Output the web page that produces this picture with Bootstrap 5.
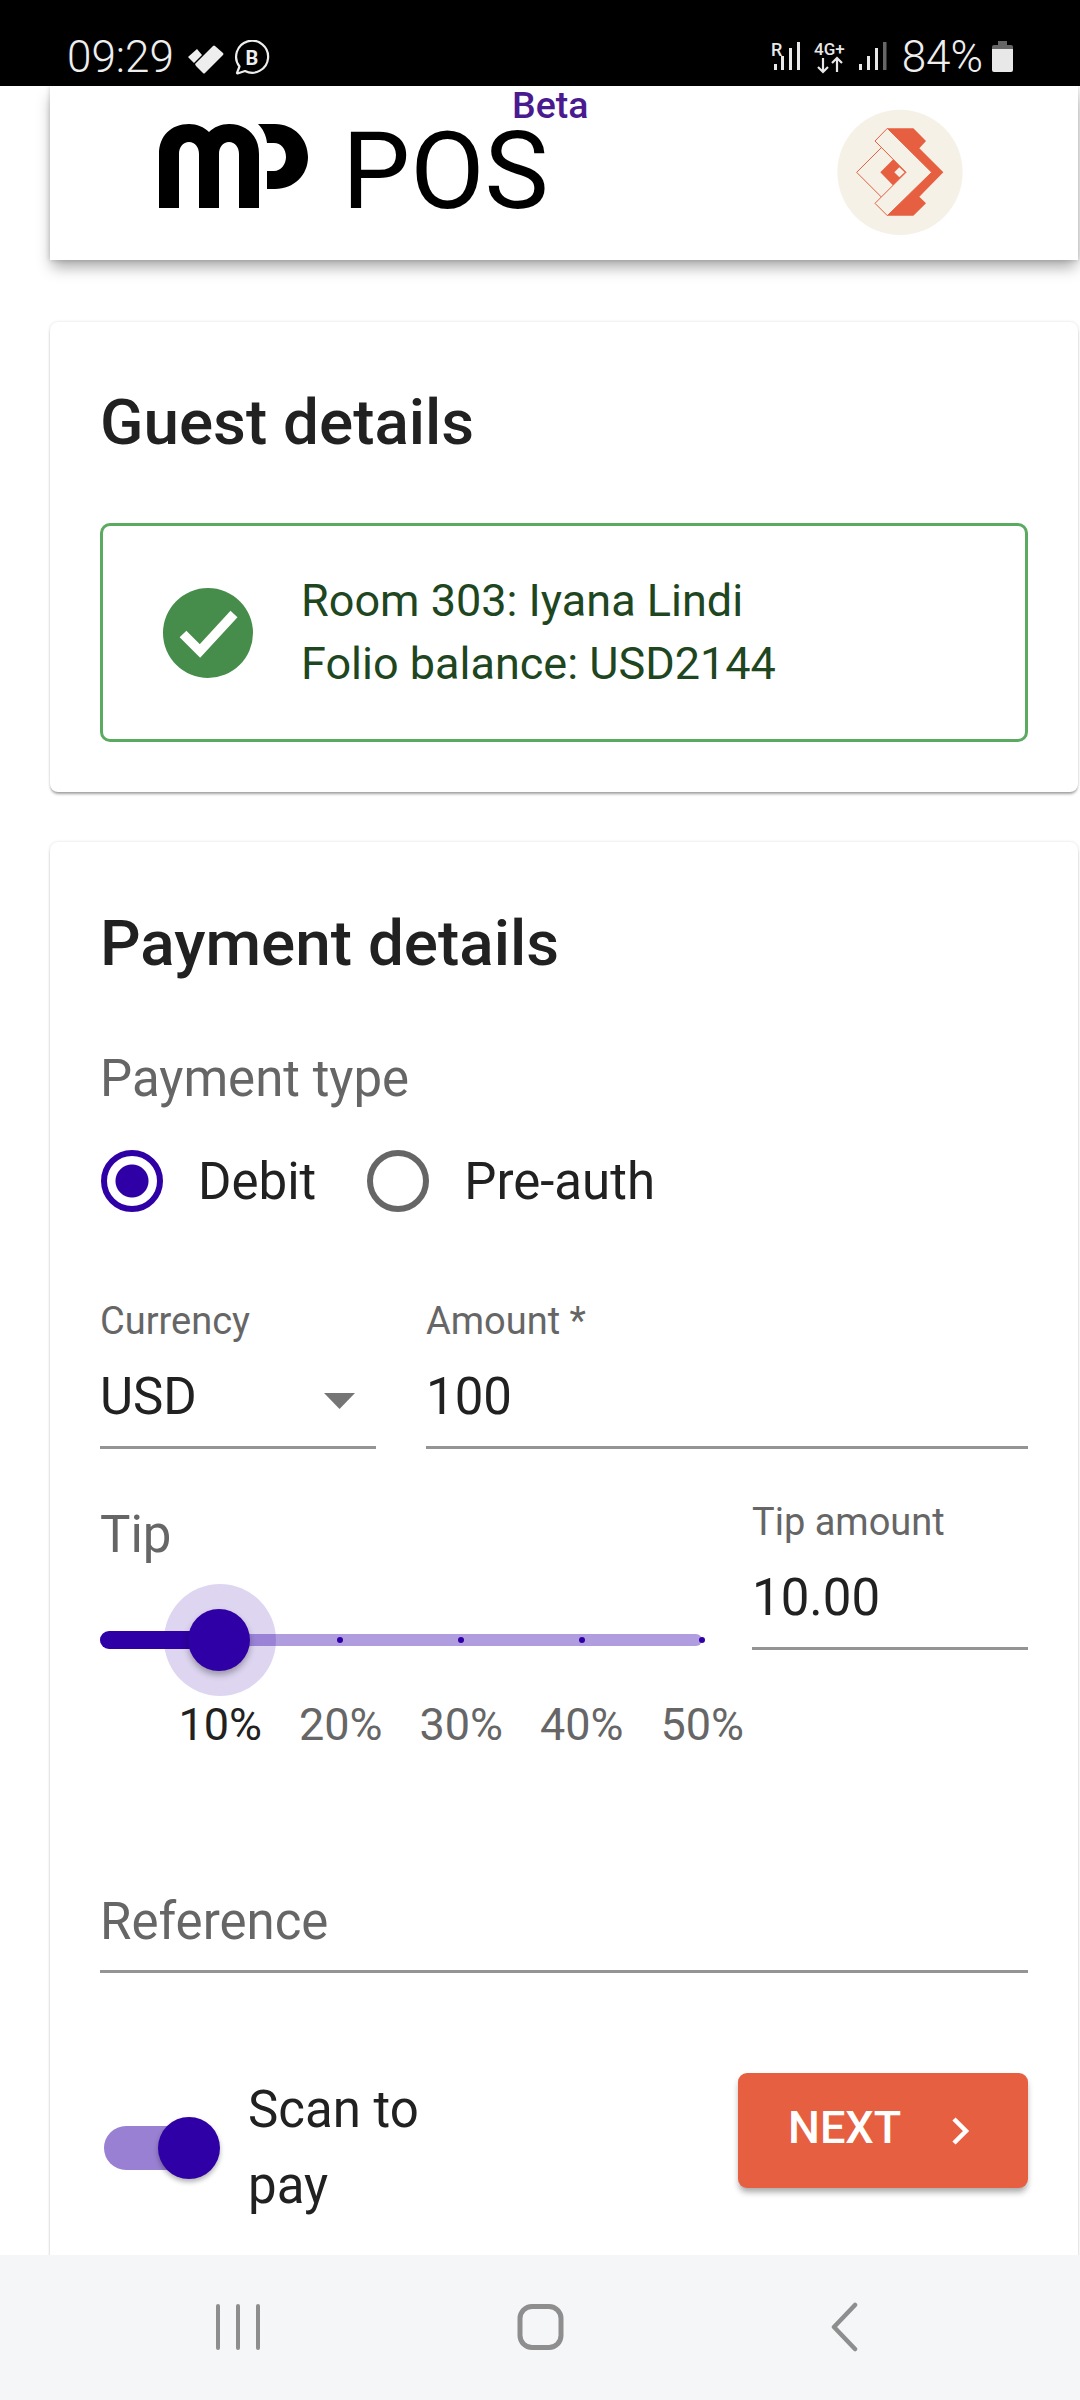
<!DOCTYPE html>
<html lang="en">
<head>
<meta charset="utf-8">
<title>MP POS</title>
<link href="https://cdn.jsdelivr.net/npm/bootstrap@5.3.0/dist/css/bootstrap.min.css" rel="stylesheet">
<style>
html,body{margin:0;height:2400px;overflow:hidden;background:#fff;font-family:Roboto,"Liberation Sans",sans-serif;color:#212121}
.phone{height:2400px;width:1080px}
.status-bar{height:86px;background:#000;color:#eee;padding:0 67px 0 67px;flex:none}
.status-time{font-size:44px;font-weight:300;line-height:40px;margin-top:37px}
.status-pct{font-size:44px;font-weight:300;line-height:40px;margin:37px 9px 0 15px;white-space:nowrap}
.status-ic{display:block;margin-top:41px}
.ic-check{margin-left:14px;margin-top:45px}
.ic-biz{margin-left:10px;margin-top:40px}
.ic-tall{margin-top:38px}
.ml-11{margin-left:11px}.ml-12{margin-left:12px}
.app-main{flex:1 1 auto;min-height:0;padding:0 2px 0 50px}
.app-head{height:174px;background:#fff;box-shadow:0 9px 14px -2px rgba(0,0,0,.34),0 0 5px rgba(0,0,0,.18);position:relative;padding-left:109px}
.mp-logo{display:block;margin-top:38px}
.pos-word{font-size:108px;font-weight:400;line-height:84px;margin:43px 0 0 33px;color:#000}
.beta-tag{position:absolute;left:462px;top:1px;font-size:37.5px;font-weight:500;line-height:36px;color:#4a1a8f}
.pms-logo{display:block;margin:4px 98px 0 auto}
.sheet{border:0;border-radius:8px;background:#fff;box-shadow:0 3px 3px -1px rgba(0,0,0,.35),0 0 3px rgba(0,0,0,.14);--bs-card-bg:#fff}
.sheet-guest{margin-top:62px;height:470px;padding:0 50px}
.sheet-pay{margin-top:50px;height:1500px;padding:0 50px}
.sheet-title{font-size:63.8px;font-weight:500;line-height:76px;margin:0;color:#212121}
.guest-title{padding-top:63px}
.pay-title{padding-top:64px}
.ok-box{margin-top:62px;height:219px;border:3px solid #5aaa5f;border-radius:10px;color:#1e4620;padding-left:60px}
.ok-icon{display:block;flex:none}
.ok-text{margin:0 0 2px 48px;font-size:45px;line-height:63px}
.field-head{font-size:51px;line-height:60px;color:#666}
.pay-type{margin-top:67px}
.radio-row{margin:41px 0 0 1px;height:62px}
.radio-dot{width:62px;height:62px;border-radius:50%;border:6px solid #666;flex:none;display:block}
.radio-dot.on{border-color:#2f00a5;background:radial-gradient(circle,#2f00a5 0 16px,transparent 17px)}
.radio-txt{font-size:51px;line-height:62px;margin-left:35px;margin-right:51px;padding-top:2px;color:#212121}
.pair-row{margin-top:87px}
.f-cur{width:276px;margin-right:50px;flex:none}
.f-amt{flex:1 1 auto}
.f-lab{font-size:38px;line-height:44px;color:#666}
.f-val{font-size:51px;line-height:60px;color:#212121;margin-top:24px;height:79px}
.f-box{border-bottom:3px solid #949494}
.f-arrow{display:block;margin:50px 21px 0 0}
.tip-row{margin-top:55px}
.tip-left{width:652px;flex:none;padding-top:1px}
.tip-field{flex:1 1 auto;margin-top:-4px}
.slide-wrap{position:relative;height:112px;margin-top:19px;width:602px}
.slide-track{position:absolute;left:0;right:0;top:50px;height:12px;border-radius:6px;background:#af9ddf}
.slide-done{position:absolute;left:0;top:47px;width:119px;height:18px;border-radius:9px;background:#2f00a5}
.slide-halo{position:absolute;left:64px;top:0;width:112px;height:112px;border-radius:50%;background:rgba(47,0,165,.16)}
.slide-thumb{position:absolute;left:88px;top:25px;width:62px;height:62px;border-radius:50%;background:#2f00a5;box-shadow:0 4px 6px rgba(0,0,0,.3)}
.slide-tick{position:absolute;top:53px;width:6px;height:6px;border-radius:50%;background:#2f00a5}
.t1{left:237px}.t2{left:358px}.t3{left:479px}.t4{left:599px}
.tick-labels{margin:3px 0 0 60px;width:603px}
.tick-lab{width:120.5px;text-align:center;font-size:45px;line-height:52px;color:#666;flex:none}
.tick-lab.on{color:#212121}
.ref-field{margin-top:141px;height:81px;font-size:51px;line-height:60px;color:#666}
.scan-row{margin-top:98px}
.switch-wrap{position:relative;width:116px;height:63px;margin:46px 0 0 4px;flex:none}
.switch-track{position:absolute;left:0;right:4px;top:9px;height:44px;border-radius:22px;background:#9980d2}
.switch-knob{position:absolute;right:0;top:0;width:62px;height:62px;border-radius:50%;background:#2f00a5;box-shadow:0 3px 5px rgba(0,0,0,.3)}
.scan-txt{font-size:51px;line-height:76px;margin:1px 0 0 28px;width:200px;color:#212121}
.next-btn{--bs-btn-bg:#e65f41;--bs-btn-hover-bg:#e65f41;--bs-btn-color:#fff;--bs-btn-hover-color:#fff;background:#e65f41;color:#fff;border:0;border-radius:9px;width:290px;height:115px;font-size:45px;font-weight:500;line-height:50px;padding:0 0 6px 50px;margin:2px 0 0 auto;box-shadow:0 5px 6px -1px rgba(0,0,0,.35)}
.next-chev{display:block;margin:6px 0 0 50px}
.sys-nav{height:145px;background:#f5f6f8;flex:none;position:relative}
.nav-a{position:absolute;display:block}
.n1{left:216px;top:49px}.n2{left:516px;top:49px}.n3{left:829px;top:47px}
</style>
</head>
<body>
<div class="phone d-flex flex-column">
  <div class="status-bar d-flex">
    <div class="status-time">09:29</div>
    <svg class="status-ic ic-check" width="36" height="30" viewBox="0 0 36 30"><path d="M0 12 L9 4 L14 10 L6 18Z M7 19 L25 1 Q26 0 27 1 L35 8 Q36 9 35 10 L17 28 Q16 29 15 28 L8 21 Z" fill="#eee"/></svg>
    <svg class="status-ic ic-biz" width="36" height="36" viewBox="0 0 36 36"><path d="M3 33 L5.500 26.500 A16 16 0 1 1 11 31 L3.500 33.500 Z" fill="none" stroke="#eee" stroke-width="2.200" stroke-linejoin="round"/><text x="18" y="24.500" text-anchor="middle" font-family="Roboto" font-weight="700" font-size="20" fill="#eee">B</text></svg>
    <div class="ms-auto d-flex">
      <svg class="status-ic ic-tall" width="32" height="35" viewBox="0 0 32 35"><text x="0" y="18" font-family="Roboto" font-weight="500" font-size="18" fill="#e8e8e8">R</text><g fill="#e8e8e8"><rect x="3" y="26" width="3" height="6"/><rect x="10" y="18" width="3" height="14"/><rect x="18" y="10" width="3" height="22"/><rect x="26" y="4" width="3" height="28"/></g></svg>
      <svg class="status-ic ic-tall ml-11" width="33" height="37" viewBox="0 0 33 37"><text x="0" y="17" font-family="Roboto" font-weight="500" font-size="17" fill="#e8e8e8">4G+</text><path d="M9 20V34M4 29l5 5 5-5M23 34V20M18 25l5-5 5 5" fill="none" stroke="#e8e8e8" stroke-width="2.200"/></svg>
      <svg class="status-ic ml-12" width="28" height="32" viewBox="0 0 28 32"><rect x="0" y="23" width="3" height="6" fill="#e8e8e8"/><rect x="8" y="15" width="3" height="14" fill="#e8e8e8"/><rect x="16" y="7" width="3" height="22" fill="#e8e8e8"/><rect x="24" y="1" width="3.500" height="28" fill="#666"/></svg>
      <div class="status-pct">84%</div>
      <svg class="status-ic" width="21" height="31" viewBox="0 0 21 31"><path d="M6 0h9v4H6z" fill="#666"/><path d="M2 4h17a2 2 0 0 1 2 2v2H0V6a2 2 0 0 1 2-2z" fill="#666"/><path d="M0 8h21v21a2 2 0 0 1-2 2H2a2 2 0 0 1-2-2z" fill="#e8e8e8"/></svg>
    </div>
  </div>

  <div class="app-main">
    <header class="app-head d-flex">
      <svg class="mp-logo" width="150" height="84" viewBox="0 0 150 84"><path d="M0 84V30C0 12 12 0 30 0C38 0 45 3 50 8C55 3 62 0 70 0C88 0 100 12 100 30V84H80V30C80 23 76 18 70 18C64 18 60 23 60 30V84H40V30C40 23 36 18 30 18C24 18 20 23 20 30V84Z" fill="#000"/><path d="M99 0H116C135 0 149 15 149 33C149 51 135 65 116 65H108V47H115C122 47 127 40 127 33C127 25 122 19 115 19H108C107 11 104 5 99 0Z" fill="#000"/></svg>
      <div class="pos-word">POS</div>
      <div class="beta-tag">Beta</div>
      <svg class="pms-logo" width="180" height="160" viewBox="0 0 540 480"><circle cx="300" cy="247" r="188" fill="#f5f1e6"/><path d="M262 115H340L378 153L358 175L430 247L358 320L378 340L340 377H262Z" fill="#e65f41"/><path d="M170 247L245 172L320 247L245 322Z" fill="#f5f1e6" stroke="#e65f41" stroke-width="3"/><path d="M280 208L320 247L280 287L241 247Z" fill="#e65f41"/><path d="M298 232L314 247L298 262L283 247Z" fill="#f5f1e6"/><path d="M225 153L262 115L395 247L262 377L225 340L318 247Z" fill="#f5f1e6" stroke="#e65f41" stroke-width="3" stroke-linejoin="miter"/></svg>
    </header>

    <section class="card sheet sheet-guest">
      <h2 class="sheet-title guest-title">Guest details</h2>
      <div class="ok-box d-flex align-items-center">
        <svg class="ok-icon" width="90" height="90" viewBox="0 0 90 90"><circle cx="45" cy="45" r="45" fill="#468c4a"/><path d="M20 46L37 63L71 26" fill="none" stroke="#fff" stroke-width="9.500"/></svg>
        <div class="ok-text">Room 303: Iyana Lindi<br>Folio balance: USD2144</div>
      </div>
    </section>

    <section class="card sheet sheet-pay">
      <h2 class="sheet-title pay-title">Payment details</h2>
      <div class="field-head pay-type">Payment type</div>
      <div class="radio-row d-flex align-items-center">
        <span class="radio-dot on"></span><span class="radio-txt">Debit</span>
        <span class="radio-dot"></span><span class="radio-txt">Pre-auth</span>
      </div>
      <div class="pair-row d-flex">
        <div class="f-cur">
          <div class="f-lab">Currency</div>
          <div class="f-box d-flex justify-content-between"><div class="f-val">USD</div><svg class="f-arrow" width="31" height="16" viewBox="0 0 31 16"><path d="M0 0H31L15.500 16Z" fill="#757575"/></svg></div>
        </div>
        <div class="f-amt">
          <div class="f-lab">Amount *</div>
          <div class="f-box"><div class="f-val">100</div></div>
        </div>
      </div>
      <div class="tip-row d-flex">
        <div class="tip-left">
          <div class="field-head">Tip</div>
          <div class="slide-wrap">
            <div class="slide-track"></div>
            <div class="slide-done"></div>
            <div class="slide-tick t1"></div><div class="slide-tick t2"></div><div class="slide-tick t3"></div><div class="slide-tick t4"></div>
            <div class="slide-halo"></div>
            <div class="slide-thumb"></div>
          </div>
          <div class="tick-labels d-flex">
            <div class="tick-lab on">10%</div><div class="tick-lab">20%</div><div class="tick-lab">30%</div><div class="tick-lab">40%</div><div class="tick-lab">50%</div>
          </div>
        </div>
        <div class="tip-field">
          <div class="f-lab">Tip amount</div>
          <div class="f-box"><div class="f-val">10.00</div></div>
        </div>
      </div>
      <div class="ref-field f-box">Reference</div>
      <div class="scan-row d-flex align-items-start">
        <div class="switch-wrap"><div class="switch-track"></div><div class="switch-knob"></div></div>
        <div class="scan-txt">Scan to pay</div>
        <button class="btn next-btn d-flex align-items-center" type="button">NEXT<svg class="next-chev" width="20" height="30" viewBox="0 0 20 30"><path d="M3 3L15 15L3 27" fill="none" stroke="#fff" stroke-width="4.500"/></svg></button>
      </div>
    </section>
  </div>

  <nav class="sys-nav">
    <svg class="nav-a n1" width="46" height="46" viewBox="0 0 46 46"><path d="M2 2V44M22 2V44M42 2V44" stroke="#8e8e8e" stroke-width="4" stroke-linecap="round" fill="none"/></svg>
    <svg class="nav-a n2" width="50" height="46" viewBox="0 0 50 46"><rect x="4" y="2.500" width="41" height="41" rx="12" fill="none" stroke="#8e8e8e" stroke-width="5"/></svg>
    <svg class="nav-a n3" width="30" height="50" viewBox="0 0 30 50"><path d="M26 3L5 25L26 47" fill="none" stroke="#8e8e8e" stroke-width="4.500" stroke-linecap="round" stroke-linejoin="round"/></svg>
  </nav>
</div>
</body>
</html>
